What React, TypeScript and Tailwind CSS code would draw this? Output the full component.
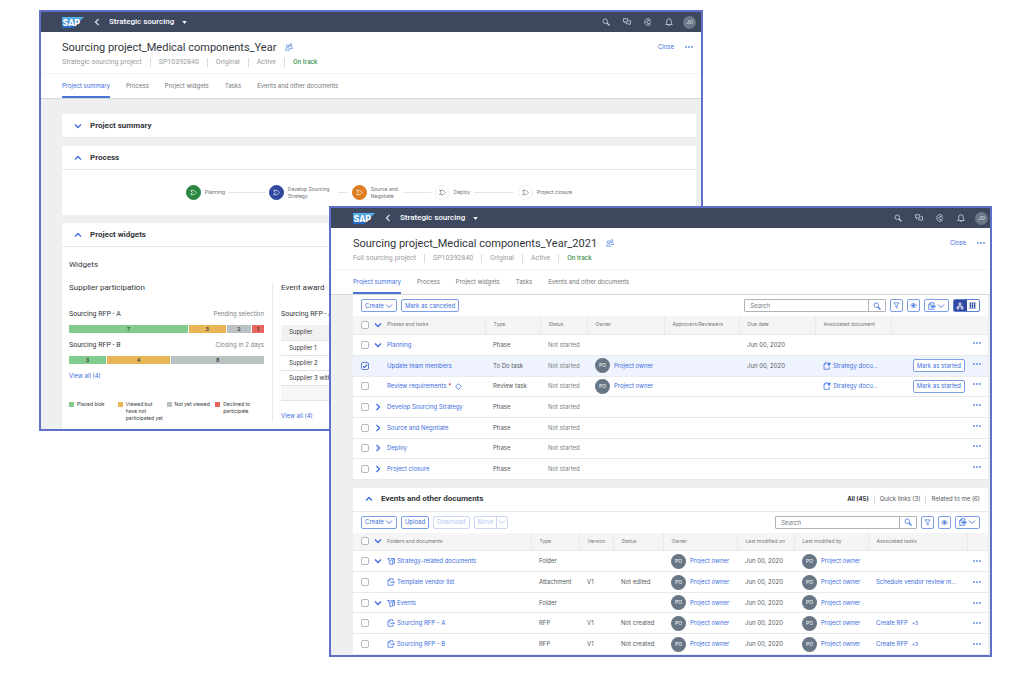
import { useState } from "react";
import type { ReactNode } from "react";
import clsx from "clsx";

type Dir = "up" | "down" | "left" | "right";

const CHEVRONS: Record<Dir, string> = {
  up: "M1 5.5 4 2.5 7 5.5",
  down: "M1 2.5 4 5.5 7 2.5",
  left: "M5.5 1 2.5 4 5.5 7",
  right: "M2.5 1 5.5 4 2.5 7",
};

function Chevron({ dir, thin = false }: { dir: Dir; thin?: boolean }) {
  return (
    <svg viewBox="0 0 8 8" className="size-2 shrink-0" fill="none" stroke="currentColor" strokeWidth={thin ? 0.9 : 1.3}>
      <path d={CHEVRONS[dir]} />
    </svg>
  );
}

const ICONS: Record<string, ReactNode> = {
  search: (
    <>
      <circle cx="6.5" cy="6.5" r="4.5" />
      <path d="M10 10 15 15" strokeWidth="2.2" />
    </>
  ),
  chat: (
    <>
      <path d="M1 1.5h8.5v6H5L3 9.5v-2H1z" />
      <path d="M11.5 5.5H15v6h-1.5V14L11 11.5H6.5V9" />
    </>
  ),
  copilot: (
    <>
      <path d="M13.5 4.5 11 1.5H5.5L2 5v6l3.500 3.500H11l2.500-3" />
      <path d="M12.5 6.500 11 5H8L6 6.500v3L8 11h3l1.500-1.500z" />
    </>
  ),
  bell: (
    <>
      <path d="M1.5 13h13l-2-3V6a4.500 4.500 0 0 0-9 0v4z" />
      <path d="M6.5 15h3" />
    </>
  ),
  people: (
    <>
      <circle cx="5" cy="6" r="2.5" />
      <path d="M1 14.500c0-3 1.500-5 4-5s4 2 4 5z" />
      <circle cx="11.5" cy="3.5" r="2.2" />
      <path d="M8.500 8.500c.6-1.400 1.600-2 3-2 2.300 0 3.500 1.700 3.500 4.500h-5" />
    </>
  ),
  filter: <path d="M2 2h12L9.500 8v6l-3-2V8z" />,
  eye: (
    <>
      <path d="M1 8c2-3.200 4.300-4.500 7-4.500S13 4.800 15 8c-2 3.200-4.300 4.500-7 4.500S3 11.200 1 8z" />
      <circle cx="8" cy="8" r="2.5" fill="currentColor" />
    </>
  ),
  share: (
    <>
      <path d="M11.500 5V1.500H5L1.500 5v9.500h10V12" />
      <path d="M1.500 5H5V1.500M6 6.500h7.500M6 10.500h7.500" />
      <path d="M5 8.500h10.500" strokeWidth="2" />
    </>
  ),
  doc: (
    <>
      <path d="M12 5V1.500H5.500L2 5v9.500h10V12" />
      <path d="M2 5h3.500V1.500" />
      <path d="M6 8.500h8.500M12.500 6l2 2.500-2 2.500" />
    </>
  ),
  linkedDoc: (
    <>
      <path d="M12.5 10v4.500H2V4.500L5 1.500h3.500" />
      <path d="M2 4.500h3v-3" />
      <path d="M9 2.500h6L12 7.500z" fill="currentColor" />
    </>
  ),
  folder: (
    <>
      <path d="M.5 3h5M3 3v4" />
      <path d="M5.500 6h6v8.500h-6z" />
      <path d="M7.500 3H15v9.500h-3M11.500 6 15 3" />
    </>
  ),
  tree: (
    <>
      <path d="M6 2h4v4H6zM2 10.500h3.500V14H2zM10.500 10.500H14V14h-3.500z" />
      <path d="M8 6v2.500M3.500 10.500v-2h9v2" />
    </>
  ),
  grid: (
    <>
      <path d="M3 1v14M8 1v14M13 1v14" strokeWidth="3" />
      <path d="M1 2h14M1 8h14M1 14h14" strokeWidth="1" />
    </>
  ),
  phase: <path d="M1.500 3h8l5 5-5 5h-8L5 8z" />,
};

function Icon({ name, className = "size-2" }: { name: string; className?: string }) {
  return (
    <svg
      viewBox="0 0 16 16"
      className={clsx("shrink-0", className)}
      fill="none"
      stroke="currentColor"
      strokeWidth="1.5"
      aria-hidden
    >
      {ICONS[name]}
    </svg>
  );
}

function SapLogo({ id }: { id: string }) {
  return (
    <svg viewBox="0 0 44 22" className="h-[11px] w-[22px]" role="img" aria-label="SAP">
      <defs>
        <linearGradient id={id} x1="0" y1="0" x2="0" y2="1">
          <stop offset="0" stopColor="#5ab5ea" />
          <stop offset="1" stopColor="#2463bd" />
        </linearGradient>
      </defs>
      <path d="M0 0H44L23 22H0z" fill={`url(#${id})`} />
      <text x="1" y="18" fontSize="18" fontWeight="900" fontFamily="Roboto, sans-serif" fill="#fff">
        SAP
      </text>
    </svg>
  );
}

function Dots() {
  return (
    <button type="button" aria-label="More" className="flex gap-px text-[#6a92e4]">
      {[0, 1, 2].map((i) => (
        <span key={i} className="size-[2px] rounded-full bg-current" />
      ))}
    </button>
  );
}

function CheckBox({ label, defaultChecked = false }: { label: string; defaultChecked?: boolean }) {
  const [checked, setChecked] = useState(defaultChecked);
  return (
    <span className="relative flex size-2 shrink-0">
      <input
        type="checkbox"
        aria-label={label}
        checked={checked}
        onChange={(e) => setChecked(e.target.checked)}
        className="size-2 appearance-none rounded-[2px] border border-[#b4b9bf] bg-white checked:border-[#5d83d3]"
      />
      {checked ? (
        <svg viewBox="0 0 8 8" className="pointer-events-none absolute inset-0 size-2" fill="none" stroke="#2c5cc5" strokeWidth="1.1">
          <path d="M2 4 3.500 5.700 6.200 2.300" />
        </svg>
      ) : null}
    </span>
  );
}

function Separator() {
  return <span className="h-[9px] w-px bg-[#d9dcde]" />;
}

type WindowProps = {
  id: string;
  title: string;
  kind: string;
  edge: string;
  className: string;
  children: ReactNode;
};

const TABS = ["Project summary", "Process", "Project widgets", "Tasks", "Events and other documents"];

function AppWindow({ id, title, kind, edge, className, children }: WindowProps) {
  return (
    <section className={clsx("absolute border-2 border-[#5f70cb] bg-[#edeff0]", className)}>
      <header className={clsx("flex h-5 items-center bg-[#3d485f] text-[#d5dbe4]", edge)}>
        <SapLogo id={id} />
        <button type="button" aria-label="Back" className="ml-[9px]">
          <Chevron dir="left" />
        </button>
        <button type="button" className="ml-2 flex items-center gap-2 text-[8px] font-medium text-white">
          Strategic sourcing
          <svg viewBox="0 0 6 4" className="h-[3px] w-[5px]" fill="#fff">
            <path d="M0 0h6L3 4z" />
          </svg>
        </button>
        <div className="ml-auto flex items-center gap-[13px]">
          {["search", "chat", "copilot", "bell"].map((name) => (
            <button key={name} type="button" aria-label={name}>
              <Icon name={name} />
            </button>
          ))}
          <span className="-ml-[3px] flex size-[13px] items-center justify-center rounded-full bg-[#6a7887] text-[6px]">
            JD
          </span>
        </div>
      </header>

      <div className="border-b border-[#d5d8da] bg-white">
        <div className={clsx("h-[42px] border-b border-[#f4f5f6] pt-2", edge)}>
          <div className="flex h-[14px] items-center">
            <h1 className="text-[11px] text-[#32363a]">{title}</h1>
            <span className="ml-[9px] text-[#5a86e0]">
              <Icon name="people" />
            </span>
            <button type="button" className="ml-auto font-[Inter,sans-serif] text-[6px] text-[#3a6de0]">
              Close
            </button>
            <span className="mr-[3px] ml-[11px]">
              <Dots />
            </span>
          </div>
          <div className="mt-[3px] flex h-[10px] items-center gap-2 text-[7px] text-[#9a9da0]">
            <span>{kind}</span>
            <Separator />
            <span>SP10392840</span>
            <Separator />
            <span>Original</span>
            <Separator />
            <span>Active</span>
            <Separator />
            <span className="font-[Inter,sans-serif] text-[6px] font-medium text-[#2b8a3e]">On track</span>
          </div>
        </div>
        <nav className={clsx("flex h-6 gap-4 font-[Inter,sans-serif] text-[6px]", edge)}>
          {TABS.map((tab, i) => (
            <button
              key={tab}
              type="button"
              className={clsx(
                "border-y-2 border-t-transparent",
                i === 0 ? "border-b-[#4a74d6] text-[#3a6de0]" : "border-b-transparent text-[#74777a]",
              )}
            >
              {tab}
            </button>
          ))}
        </nav>
      </div>
      <div className={edge}>{children}</div>
    </section>
  );
}

function PanelHeading({ title, open = true, children }: { title: string; open?: boolean; children?: ReactNode }) {
  return (
    <div className="flex h-6 items-center border-b border-[#e8eaeb] px-3">
      <button type="button" className="flex items-center gap-2 font-[Roboto,sans-serif] text-[8px] font-bold text-[#32363a]">
        <span className="text-[#3a6de0]">
          <Chevron dir={open ? "up" : "down"} />
        </span>
        {title}
      </button>
      {children}
    </div>
  );
}

const STEPS = [
  { label: "Planning", color: "border-[#2a8540] bg-[#2a8540] text-white" },
  { label: "Develop Sourcing Strategy", color: "border-[#3149a0] bg-[#3149a0] text-white" },
  { label: "Source and Negotiate", color: "border-[#dd7d22] bg-[#dd7d22] text-white" },
  { label: "Deploy", color: "border-[#f1f2f2] bg-white text-[#6a6d70]" },
  { label: "Project closure", color: "border-[#f1f2f2] bg-white text-[#6a6d70]" },
];

function ProcessSteps() {
  return (
    <ol className="flex h-[45px] items-center justify-center font-[Inter,sans-serif] text-[5px] text-[#6a6d70]">
      {STEPS.map((step, i) => {
        const last = i === STEPS.length - 1;
        return (
          <li key={step.label} className={clsx("flex items-center", !last && "w-[83px] pr-1")}>
            <span className={clsx("flex size-[15px] shrink-0 items-center justify-center rounded-full border", step.color)}>
              <Icon name="phase" className="size-[7px]" />
            </span>
            <span className={clsx("ml-1 leading-[7px]", i === 1 ? "w-[46px]" : i === 2 && "w-[28px]")}>{step.label}</span>
            {last ? null : <span className="ml-1 h-px flex-1 bg-[#e3e5e6]" />}
          </li>
        );
      })}
    </ol>
  );
}

type Segment = { value: number; share: number; color: string };

const GREEN = "bg-[#81cb8d]";
const AMBER = "bg-[#e8b557]";
const GRAY = "bg-[#bcc1c4]";
const RED = "bg-[#e7655e]";

const PARTICIPATION: { name: string; note: string; segments: Segment[] }[] = [
  {
    name: "Sourcing RFP - A",
    note: "Pending selection",
    segments: [
      { value: 7, share: 62, color: GREEN },
      { value: 3, share: 19, color: AMBER },
      { value: 2, share: 13, color: GRAY },
      { value: 1, share: 6, color: RED },
    ],
  },
  {
    name: "Sourcing RFP - B",
    note: "Closing in 2 days",
    segments: [
      { value: 3, share: 19, color: GREEN },
      { value: 4, share: 33, color: AMBER },
      { value: 8, share: 48, color: GRAY },
    ],
  },
];

const LEGEND = [
  { label: "Placed bids", color: GREEN },
  { label: "Viewed but\nhave not\nparticipated yet", color: AMBER },
  { label: "Not yet viewed", color: GRAY },
  { label: "Declined to\nparticipate", color: RED },
];

function Participation() {
  return (
    <div className="w-[204px] shrink-0 border-r border-[#e8eaeb] pr-2">
      <h3 className="h-[10px] text-[8px] leading-[10px]">Supplier participation</h3>
      <div className="mt-4 flex flex-col gap-[7px]">
        {PARTICIPATION.map((row) => (
          <div key={row.name}>
            <div className="flex h-[10px] items-center justify-between text-[7px]">
              <span>{row.name}</span>
              <span className="font-[Inter,sans-serif] text-[6px] text-[#7c7f82]">{row.note}</span>
            </div>
            <div className="mt-[6px] flex h-2 gap-px text-[6px] font-medium">
              {row.segments.map((s) => (
                <span
                  key={s.value}
                  className={clsx("flex basis-0 items-center justify-center", s.color)}
                  style={{ flexGrow: s.share }}
                >
                  {s.value}
                </span>
              ))}
            </div>
          </div>
        ))}
      </div>
      <a href="#participation" className="mt-[7px] block h-[10px] font-[Inter,sans-serif] text-[6px] leading-[10px] text-[#3a6de0]">
        View all (4)
      </a>
      <ul className="mt-5 grid grid-cols-4 font-[Inter,sans-serif] text-[5px] leading-[7px]">
        {LEGEND.map((item) => (
          <li key={item.label} className="flex gap-[3px]">
            <span className={clsx("mt-px size-[5px] shrink-0", item.color)} />
            <span className="whitespace-pre">{item.label}</span>
          </li>
        ))}
      </ul>
    </div>
  );
}

function EventAward() {
  return (
    <div className="min-w-0 flex-1 pl-2">
      <h3 className="h-[10px] text-[8px] leading-[10px]">Event award</h3>
      <div className="mt-4 h-[10px] text-[7px] leading-[10px]">Sourcing RFP - A</div>
      <table className="mt-[6px] w-full font-[Inter,sans-serif] text-[6px]">
        <thead>
          <tr className="h-[15px] border-b border-[#e0e2e4] bg-[#f2f2f2]">
            <th className="pl-2 text-left font-normal">Supplier</th>
          </tr>
        </thead>
        <tbody>
          {["Supplier 1", "Supplier 2", "Supplier 3 with"].map((name) => (
            <tr key={name} className="h-[15px] border-b border-[#e0e2e4]">
              <td className="pl-2">{name}</td>
            </tr>
          ))}
          <tr className="h-[15px] border-b border-[#e0e2e4] bg-[#f7f7f7]">
            <td />
          </tr>
        </tbody>
      </table>
      <a href="#award" className="mt-[10px] block h-[10px] font-[Inter,sans-serif] text-[6px] leading-[10px] text-[#3a6de0]">
        View all (4)
      </a>
    </div>
  );
}

function ToolButton({ children, label, disabled = false }: { children: ReactNode; label?: string; disabled?: boolean }) {
  return (
    <button
      type="button"
      aria-label={label}
      disabled={disabled}
      className="flex h-[13px] shrink-0 items-center gap-px rounded-[2px] border border-[#7c9fe8] bg-white px-[3px] text-[#3a6de0] disabled:opacity-40"
    >
      {children}
    </button>
  );
}

function IconButton({ name }: { name: string }) {
  return (
    <button
      type="button"
      aria-label={name}
      className="flex size-[13px] shrink-0 items-center justify-center rounded-[2px] border border-[#7c9fe8] bg-white text-[#3a6de0]"
    >
      <Icon name={name} className="size-[7px]" />
    </button>
  );
}

function ToolbarTools({ label, views = false }: { label: string; views?: boolean }) {
  return (
    <div className="ml-auto flex gap-1">
      <div className="flex h-[13px] w-[142px] rounded-[1px] border border-[#b0b4b9] bg-white">
        <input
          type="search"
          aria-label={label}
          placeholder="Search"
          className="min-w-0 flex-1 px-[5px] italic outline-none placeholder:text-[#74777a]"
        />
        <button
          type="button"
          aria-label="Start search"
          className="flex w-[17px] items-center justify-center border-l border-[#b0b4b9] text-[#3a6de0]"
        >
          <Icon name="search" />
        </button>
      </div>
      <IconButton name="filter" />
      <IconButton name="eye" />
      <ToolButton label="Export">
        <Icon name="share" />
        <Chevron dir="down" thin />
      </ToolButton>
      {views ? (
        <div className="flex h-[13px] w-[27px] overflow-hidden rounded-[2px] border border-[#5b7cd0]">
          <button type="button" aria-label="Tree view" className="flex flex-1 items-center justify-center bg-[#3149a0] text-white">
            <Icon name="tree" />
          </button>
          <button type="button" aria-label="Table view" className="flex flex-1 items-center justify-center text-[#3b58ad]">
            <Icon name="grid" className="size-[7px]" />
          </button>
        </div>
      ) : null}
    </div>
  );
}

function Columns({ widths }: { widths: number[] }) {
  return (
    <colgroup>
      {widths.map((w, i) => (
        <col key={i} style={{ width: w }} />
      ))}
    </colgroup>
  );
}

function HeadRow({ labels, className }: { labels: string[]; className: string }) {
  return (
    <thead>
      <tr className={clsx("border-b border-[#e6e8e9] bg-[#f5f5f5] text-[5px] text-[#74777a]", className)}>
        {labels.map((label, i) => (
          <th
            key={i}
            scope="col"
            className={clsx("pl-2 text-left font-normal", i < labels.length - 1 && "border-r border-[#e8e9ea]")}
          >
            {i === 0 ? (
              <NameCell label={label} arrow="down">
                {label}
              </NameCell>
            ) : (
              label
            )}
          </th>
        ))}
      </tr>
    </thead>
  );
}

function NameCell({ label, arrow, checked, children }: { label: string; arrow?: Dir; checked?: boolean; children: ReactNode }) {
  return (
    <div className="flex items-center">
      <CheckBox label={`Select ${label}`} defaultChecked={checked} />
      <span className="ml-[5px] flex w-[13px] text-[#3a6de0]">{arrow ? <Chevron dir={arrow} /> : null}</span>
      {children}
    </div>
  );
}

function Owner() {
  return (
    <span className="flex items-center gap-1">
      <span className="flex size-[15px] items-center justify-center rounded-full bg-[#687585] text-[5px] text-white">PO</span>
      <a href="#owner" className="text-[#3a6de0]">
        Project owner
      </a>
    </span>
  );
}

type Task = {
  name: string;
  type: string;
  arrow?: Dir;
  selected?: boolean;
  required?: boolean;
  due?: string;
};

const TASKS: Task[] = [
  { name: "Planning", type: "Phase", arrow: "down", due: "Jun 00, 2020" },
  { name: "Update team members", type: "To Do task", selected: true, due: "Jun 00, 2020" },
  { name: "Review requirements", type: "Review task", required: true },
  { name: "Develop Sourcing Strategy", type: "Phase", arrow: "right" },
  { name: "Source and Negotiate", type: "Phase", arrow: "right" },
  { name: "Deploy", type: "Phase", arrow: "right" },
  { name: "Project closure", type: "Phase", arrow: "right" },
];

const ROW = "h-[21px] border-b border-[#e8eaeb] nth-[3n]:h-5";

function TaskTable() {
  return (
    <table className="w-full table-fixed whitespace-nowrap">
      <Columns widths={[132, 55, 47, 77, 75, 76, 76, 97]} />
      <HeadRow
        className="h-[18px]"
        labels={["Phases and tasks", "Type", "Status", "Owner", "Approvers/Reviewers", "Due date", "Associated document", ""]}
      />
      <tbody>
        {TASKS.map((task) => {
          const assigned = task.type !== "Phase";
          return (
            <tr key={task.name} className={clsx(ROW, task.selected && "bg-[#eff3fd]")}>
              <td className="pl-2">
                <NameCell label={task.name} arrow={task.arrow} checked={task.selected}>
                  <a href="#task" className="text-[#3a6de0]">
                    {task.name}
                  </a>
                  {task.required ? (
                    <>
                      <span className="ml-[2px] text-[#bb0000]">*</span>
                      <svg viewBox="0 0 8 8" className="ml-1 size-[7px]" fill="none" stroke="#4a7bdb">
                        <path d="M4 .8 7.200 4 4 7.200.8 4z" />
                      </svg>
                    </>
                  ) : null}
                </NameCell>
              </td>
              <td className="pl-2">{task.type}</td>
              <td className="pl-2 text-[#7c7f82]">Not started</td>
              <td className="pl-2">{assigned ? <Owner /> : null}</td>
              <td />
              <td className="pl-2">{task.due}</td>
              <td className="pl-2">
                {assigned ? (
                  <a href="#document" className="flex items-center gap-[2px] text-[#3a6de0]">
                    <Icon name="linkedDoc" />
                    Strategy docu...
                  </a>
                ) : null}
              </td>
              <td className="pr-[7px]">
                <div className="flex items-center justify-end gap-2">
                  {assigned ? <ToolButton>Mark as started</ToolButton> : null}
                  <span className="pb-1">
                    <Dots />
                  </span>
                </div>
              </td>
            </tr>
          );
        })}
      </tbody>
    </table>
  );
}

type Doc = {
  name: string;
  icon: string;
  type: string;
  arrow?: Dir;
  version?: string;
  status?: string;
  task?: string;
  more?: string;
};

const DOCS: Doc[] = [
  { name: "Strategy-related documents", icon: "folder", type: "Folder", arrow: "down" },
  { name: "Template vendor list", icon: "doc", type: "Attachment", version: "V1", status: "Not edited", task: "Schedule vendor review m..." },
  { name: "Events", icon: "folder", type: "Folder", arrow: "down" },
  { name: "Sourcing RFP - A", icon: "doc", type: "RFP", version: "V1", status: "Not created", task: "Create RFP", more: "+3" },
  { name: "Sourcing RFP - B", icon: "doc", type: "RFP", version: "V1", status: "Not created", task: "Create RFP", more: "+3" },
];

function DocumentTable() {
  return (
    <table className="w-full table-fixed whitespace-nowrap">
      <Columns widths={[178, 48, 34, 50, 74, 57, 74, 99, 21]} />
      <HeadRow
        className="h-[18px]"
        labels={["Folders and documents", "Type", "Version", "Status", "Owner", "Last modified on", "Last modified by", "Associated tasks", ""]}
      />
      <tbody>
        {DOCS.map((doc) => (
          <tr key={doc.name} className={ROW}>
            <td className="pl-2">
              <NameCell label={doc.name} arrow={doc.arrow}>
                <a href="#document" className="flex items-center gap-[2px] text-[#3a6de0]">
                  <Icon name={doc.icon} />
                  {doc.name}
                </a>
              </NameCell>
            </td>
            <td className="pl-2">{doc.type}</td>
            <td className="pl-2">{doc.version}</td>
            <td className="pl-2">{doc.status}</td>
            <td className="pl-2">
              <Owner />
            </td>
            <td className="pl-2">Jun 00, 2020</td>
            <td className="pl-2">
              <Owner />
            </td>
            <td className="pl-2">
              {doc.task ? (
                <a href="#task" className="text-[#3a6de0]">
                  {doc.task}
                  {doc.more ? <span className="ml-1 text-[5px]">{doc.more}</span> : null}
                </a>
              ) : null}
            </td>
            <td className="pr-[7px]">
              <div className="flex justify-end">
                <Dots />
              </div>
            </td>
          </tr>
        ))}
      </tbody>
    </table>
  );
}

export default function App() {
  return (
    <main className="relative min-h-screen bg-white font-[Roboto,sans-serif] leading-none text-[#32363a]">
      <AppWindow
        id="sap-back"
        title="Sourcing project_Medical components_Year"
        kind="Strategic sourcing project"
        edge="pl-[21px] pr-[5px]"
        className="top-[10px] right-[321px] left-[39px]"
      >
        <div className="flex flex-col gap-2 pt-[15px]">
          <div className="rounded-[1px] bg-white">
            <PanelHeading title="Project summary" open={false} />
          </div>
          <div className="rounded-[1px] bg-white">
            <PanelHeading title="Process" />
            <ProcessSteps />
          </div>
          <div className="rounded-[1px] bg-white">
            <PanelHeading title="Project widgets" />
            <div className="px-[7px] pt-[13px] pb-[7px]">
              <h2 className="h-[10px] text-[8px] leading-[10px]">Widgets</h2>
              <div className="mt-[13px] flex">
                <Participation />
                <EventAward />
              </div>
            </div>
          </div>
        </div>
      </AppWindow>

      <AppWindow
        id="sap-front"
        title="Sourcing project_Medical components_Year_2021"
        kind="Full sourcing project"
        edge="pl-[22px] pr-[2px]"
        className="top-[206px] right-8 left-[329px]"
      >
        <div className="flex flex-col gap-2 font-[Inter,sans-serif] text-[6px] text-[#55585c]">
          <div className="bg-white">
            <div className="flex h-[21px] items-center gap-1 px-2">
              <ToolButton>
                Create
                <Chevron dir="down" thin />
              </ToolButton>
              <ToolButton>Mark as canceled</ToolButton>
              <ToolbarTools label="Search tasks" views />
            </div>
            <TaskTable />
          </div>
          <div className="bg-white">
            <PanelHeading title="Events and other documents">
              <div className="-mr-1 ml-auto flex items-center gap-[5px]">
                <button type="button" className="font-bold text-[#32363a]">
                  All (45)
                </button>
                <Separator />
                <button type="button">Quick links (3)</button>
                <Separator />
                <button type="button">Related to me (6)</button>
              </div>
            </PanelHeading>
            <div className="flex h-[21px] items-center gap-1 px-2">
              <ToolButton>
                Create
                <Chevron dir="down" thin />
              </ToolButton>
              <ToolButton>Upload</ToolButton>
              <ToolButton disabled>Download</ToolButton>
              <div className="flex h-[13px] rounded-[2px] border border-[#7c9fe8] text-[#3a6de0] opacity-40">
                <button type="button" disabled className="px-[3px]">
                  Move
                </button>
                <button type="button" disabled aria-label="Move options" className="border-l border-[#7c9fe8] px-px">
                  <Chevron dir="down" thin />
                </button>
              </div>
              <ToolbarTools label="Search documents" />
            </div>
            <DocumentTable />
          </div>
        </div>
      </AppWindow>
    </main>
  );
}
